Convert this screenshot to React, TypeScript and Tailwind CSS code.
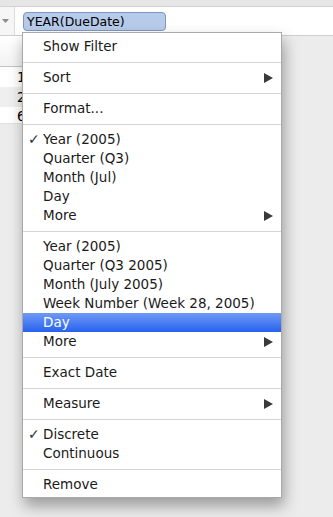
import React from 'react';

type Entry =
  | { kind: 'sep' }
  | { kind: 'item'; label: string; checked?: boolean; submenu?: boolean; active?: boolean };

const item = (label: string, opts: Partial<Omit<Extract<Entry, { kind: 'item' }>, 'kind' | 'label'>> = {}): Entry => ({
  kind: 'item',
  label,
  ...opts,
});
const sep: Entry = { kind: 'sep' };

const entries: Entry[] = [
  item('Show Filter'),
  sep,
  item('Sort', { submenu: true }),
  sep,
  item('Format...'),
  sep,
  item('Year (2005)', { checked: true }),
  item('Quarter (Q3)'),
  item('Month (Jul)'),
  item('Day'),
  item('More', { submenu: true }),
  sep,
  item('Year (2005)'),
  item('Quarter (Q3 2005)'),
  item('Month (July 2005)'),
  item('Week Number (Week 28, 2005)'),
  item('Day', { active: true }),
  item('More', { submenu: true }),
  sep,
  item('Exact Date'),
  sep,
  item('Measure', { submenu: true }),
  sep,
  item('Discrete', { checked: true }),
  item('Continuous'),
  sep,
  item('Remove'),
];

const Arrow = ({ white }: { white?: boolean }) => (
  <svg width="9" height="10" viewBox="0 0 9 10" className="absolute right-[8px] top-[5px]">
    <polygon points="0,0 9,5 0,10" fill={white ? '#ffffff' : '#3a3a3a'} />
  </svg>
);

const ContextMenu = () => (
  <div className="absolute left-[22px] top-[32px] w-[260px] bg-white border border-[#a9a9a9] pt-[4px] pb-[3px] shadow-[2px_8px_14px_rgba(0,0,0,0.35)]">
    {entries.map((e, i) =>
      e.kind === 'sep' ? (
        <div key={i} className="h-[12px] flex items-center">
          <div className="h-px w-full bg-[#d5d5d5]" />
        </div>
      ) : (
        <div
          key={i}
          className={
            e.active
              ? 'relative h-[19px] leading-[19px] pl-[20px] text-white bg-gradient-to-b from-[#7099f6] to-[#2660ee]'
              : 'relative h-[19px] leading-[19px] pl-[20px] text-[#1a1a1a]'
          }
        >
          {e.checked && <span className="absolute left-[5px] top-0 text-[14px] text-[#333]">✓</span>}
          {e.label}
          {e.submenu && <Arrow white={e.active} />}
        </div>
      ),
    )}
  </div>
);

export default function App() {
  return (
    <div className="relative w-[333px] h-[517px] overflow-hidden bg-[#ececec] text-[13.5px] font-['DejaVu_Sans',sans-serif]">
      <div className="h-[7px] bg-[#e6e6e6] border-b border-[#d2d2d2]" />
      <div className="flex h-[29px] bg-white border-b border-[#cfcfcf]">
        <div className="w-[15px] border-r border-[#dcdcdc] bg-[#f6f6f6] flex justify-start pl-[2px] pt-[12px]">
          <svg width="7" height="4" viewBox="0 0 7 4">
            <polygon points="0,0 7,0 3.5,4" fill="#8a8a8a" />
          </svg>
        </div>
        <div className="ml-[8px] mt-[5px] h-[19px] w-[143px] rounded-[4px] border border-[#7f96bd] bg-[#b6cae9] pl-[3px] leading-[17px] text-[12.5px] text-black">
          YEAR(DueDate)
        </div>
      </div>
      <div className="w-[80px] bg-white">
        <div className="h-[31px] bg-gradient-to-b from-white to-[#f3f3f3] border-b border-[#c4c4c4]" />
        <div className="h-[20px] pl-[17px] leading-[20px] text-black">1</div>
        <div className="h-[20px] pl-[17px] leading-[20px] bg-[#efefef] text-black">2</div>
        <div className="h-[17px] pl-[17px] leading-[18px] text-black border-b border-[#e0e0e0]">6</div>
      </div>
      <ContextMenu />
    </div>
  );
}
